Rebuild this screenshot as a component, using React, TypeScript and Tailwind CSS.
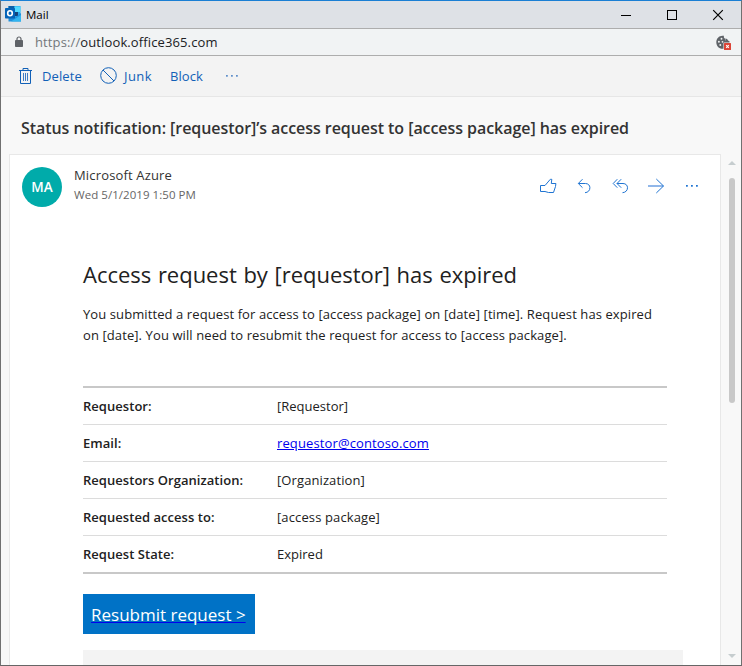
import type { ReactNode } from "react";

function OutlookLogo() {
  return (
    <svg width="16" height="16" viewBox="0 0 16 16">
      <rect x="3.500" y="0" width="12" height="12" fill="#28a8ea" />
      <rect x="3.500" y="0" width="6" height="4" fill="#0a5ea8" />
      <rect x="9.500" y="0.500" width="6" height="5.500" fill="#50d9ff" />
      <rect x="7" y="6" width="6" height="4" fill="#14447d" />
      <path d="M3.500 15.500V8l6.500 3.500L16 7v8.500z" fill="#1f8fdc" />
      <path d="M16 7v8.500H6L16 9z" fill="#31b5f0" />
      <rect x="0" y="2" width="10" height="10.500" rx="0.700" fill="#0463b8" />
      <ellipse cx="5" cy="7.300" rx="2.300" ry="2.500" fill="none" stroke="#fff" strokeWidth="1.600" />
    </svg>
  );
}

function Lock() {
  return (
    <svg width="8" height="12" viewBox="0 0 8 12">
      <path d="M2 5V3a2 2 0 0 1 4 0v2" fill="none" stroke="#5f6368" strokeWidth="1.200" />
      <rect x="0" y="4" width="8" height="7" rx="0.800" fill="#5f6368" />
    </svg>
  );
}

function BlockedCookie() {
  return (
    <svg width="16" height="16" viewBox="0 0 16 16">
      <path d="M6.500 0.700C3 0.700 0.300 3.600 0.300 7.200s2.700 6.600 6.200 6.600c3.700 0 6.500-2.700 6.700-6.100-1.300.1-1.700-.7-1.900-1.600-1.600.2-2.400-.9-2-2.300C8 3.500 7.500 2 8 .8z" fill="#5f6368" />
      <path d="M9.500 3.500l1.600.4 1 1.500 1.500 1-.2 2h-4z" fill="#5f6368" />
      <g fill="#f1f3f4">
        <circle cx="5.500" cy="3.800" r="0.950" />
        <circle cx="2.900" cy="6.800" r="0.950" />
        <circle cx="6.500" cy="6.800" r="0.850" />
        <circle cx="4.300" cy="10" r="0.950" />
      </g>
      <rect x="7.500" y="7.500" width="8" height="8" rx="0.600" fill="#f1f3f4" />
      <rect x="8" y="8" width="7" height="7" rx="0.500" fill="#db4437" />
      <path d="M10.200 10.200l2.600 2.600m0-2.600l-2.600 2.600" stroke="#fff" strokeWidth="1.100" />
    </svg>
  );
}

function Trash() {
  return (
    <svg width="13" height="16" viewBox="0 0 13 16" fill="none" stroke="#1160b7">
      <path d="M0 2.500h13M4 2.500v-2h5v2M1.500 2.500v13h10v-13" />
      <path d="M4.500 5v8M6.500 5v8M8.500 5v8" stroke="#3f7cc4" />
    </svg>
  );
}

function Junk() {
  return (
    <svg className="-mt-px" width="17" height="17" viewBox="0 0 17 17" fill="none" stroke="#1160b7">
      <circle cx="8.500" cy="8.500" r="7.800" />
      <path d="M3 3l11 11" />
    </svg>
  );
}

function Dots({ color }: { color: string }) {
  return (
    <svg width="14" height="2" viewBox="0 0 14 2" fill={color}>
      <rect x="1" y="0" width="1.800" height="1.700" />
      <rect x="6" y="0" width="1.800" height="1.700" />
      <rect x="11" y="0" width="1.800" height="1.700" />
    </svg>
  );
}

function Row({ label, last, children }: { label: string; last?: boolean; children: ReactNode }) {
  return (
    <div className={last ? "flex h-9 items-center pt-0.5" : "flex h-[37px] items-center border-b border-[#dcdcdc] pt-0.5"}>
      <div className="w-[194px] font-semibold tracking-[0.040px]">{label}</div>
      <div>{children}</div>
    </div>
  );
}

export default function App() {
  return (
    <div className="flex h-[666px] w-[742px] flex-col overflow-hidden border border-t-[#1a7fd4] border-r-[#707070] border-b-[#666] border-l-[#707070] bg-[#f8f8f8] font-['Open_Sans','Noto_Sans',sans-serif] text-[13px] text-[#212121]">
      <header className="flex h-7 shrink-0 items-center border-b border-[#adadad] bg-[#dee1e6] pl-1">
        <div className="-mt-0.5">
          <OutlookLogo />
        </div>
        <span className="ml-[5px] text-[11.500px] leading-[28px] text-black">Mail</span>
        <svg className="mt-px mr-4 ml-auto" width="104" height="12" viewBox="0 0 104 12" fill="none" stroke="#000">
          <path d="M0 6.500h10" />
          <rect x="46.500" y="1.500" width="9" height="9" />
          <path d="M92.200 1.200l9.600 9.600M101.800 1.200l-9.600 9.600" strokeWidth="1.200" />
        </svg>
      </header>

      <div className="flex h-[27px] shrink-0 items-center border-b border-[#adadad] bg-[#f1f3f4] pl-[14px]">
        <Lock />
        <div className="ml-3 pt-0.5 tracking-[0.120px] text-[#202124]">
          <span className="text-[#73777b]">https://</span>outlook.office365.com
        </div>
        <div className="mt-0.5 mr-[9px] ml-auto">
          <BlockedCookie />
        </div>
      </div>

      <nav className="flex h-[41px] shrink-0 items-center border-b border-[#e6e6e6] bg-[#f3f3f3] pl-[18px] text-[#1160b7]">
        <Trash />
        <span className="ml-[10px] w-[58px] pt-0.5 tracking-[0.100px]">Delete</span>
        <Junk />
        <span className="ml-[7px] w-[46px] pt-0.5 tracking-[0.400px]">Junk</span>
        <span className="w-[55px] pt-0.5 tracking-[0.050px]">Block</span>
        <Dots color="#5f8fca" />
      </nav>

      <h1 className="h-[57px] shrink-0 pl-5 text-[16px] leading-[63px] font-semibold tracking-[-0.058px] whitespace-nowrap text-[#333]">
        Status notification: [requestor]’s access request to [access package] has expired
      </h1>

      <div className="flex min-h-0 flex-1 pl-2">
        <main className="w-[712px] shrink-0 overflow-hidden border border-b-0 border-[#e8e8e8] bg-white">
          <div className="flex h-[98px] pt-3 pl-3">
            <div className="flex size-10 shrink-0 items-center justify-center rounded-full bg-[#00abaa] text-[13.500px] font-semibold text-white">
              MA
            </div>
            <div className="ml-3 pt-px">
              <div className="h-[14px] leading-[14px] tracking-[0.160px] text-[#333]">Microsoft Azure</div>
              <div className="mt-[5px] h-[15px] text-[11.500px] leading-[15px] tracking-[0.050px] text-[#666]">Wed 5/1/2019 1:50 PM</div>
            </div>
            <div className="mr-[21px] ml-auto flex h-[37px] items-center">
              <svg width="17" height="16" viewBox="0 0 17 16" fill="none" stroke="#1f74d2">
                <path d="M0.500 7.500H5L10.300 1.300H11.800L11.300 5.500H15.900L15.500 8.500L13.500 14.500H8.500L5 13.500H0.500Z" />
              </svg>
              <svg className="ml-5" width="15" height="16" viewBox="0 0 15 16" fill="none" stroke="#1f74d2">
                <path d="M5.500 1.200L1.300 5.500L5.500 9.700M1.500 5.500H8.500C11.200 5.500 12.900 7.400 12.900 9.700C12.900 12.500 11 14.500 8 14.700" />
              </svg>
              <svg className="ml-5" width="17" height="16" viewBox="0 0 17 16" fill="none" stroke="#1f74d2">
                <path d="M5.300 1.200L1.200 5.500L5.300 9.700M9.200 1.200L5 5.500L9.200 9.700M5 5.500H11C13.800 5.500 15.500 7.400 15.500 9.700C15.500 12.500 13.500 14.500 10.500 14.700" />
              </svg>
              <svg className="ml-[19px]" width="17" height="16" viewBox="0 0 17 16" fill="none" stroke="#1f74d2">
                <path d="M0 8H15.500" stroke="#6d9fe2" strokeWidth="1.500" />
                <path d="M8.300 1L15.500 8L8.300 15" />
              </svg>
              <span className="ml-5 flex">
                <Dots color="#1f74d2" />
              </span>
            </div>
          </div>

          <article className="ml-[73px] w-[600px]">
            <h2 className="h-[42px] text-[22px] leading-[42px] tracking-[-0.020px] whitespace-nowrap [word-spacing:1px]">
              Access request by [requestor] has expired
            </h2>
            <p className="mt-[9px] leading-[21px] tracking-[0.093px] whitespace-nowrap">
              You submitted a request for access to [access package] on [date] [time]. Request has expired
              <br />
              on [date]. You will need to resubmit the request for access to [access package].
            </p>
            <div className="mt-10 w-[584px] border-y-2 border-[#c8c8c8]">
              <Row label="Requestor:">[Requestor]</Row>
              <Row label="Email:">
                <span className="tracking-[0.120px] text-[#0000ee] underline underline-offset-1">requestor@contoso.com</span>
              </Row>
              <Row label="Requestors Organization:">
                <span className="tracking-[0.100px]">[Organization]</span>
              </Row>
              <Row label="Requested access to:">
                <span className="tracking-[0.120px]">[access package]</span>
              </Row>
              <Row label="Request State:" last>
                Expired
              </Row>
            </div>
            <div className="mt-5 flex h-10 w-[172px] items-center bg-[#0072c6] pt-0.5 pl-2 text-[17px]">
              <span className="whitespace-nowrap text-white underline decoration-[#0000ee] decoration-1 underline-offset-1">
                Resubmit request &gt;
              </span>
            </div>
            <div className="mt-4 h-4 bg-[#f3f3f3]" />
          </article>
        </main>

        <aside className="flex flex-1 flex-col items-center pl-[2px]">
          <svg className="mt-[7px]" width="8" height="4" viewBox="0 0 8 4">
            <path d="M0 4L4 0L8 4Z" fill="#c6cdcf" />
          </svg>
          <div className="mt-[13px] h-[225px] w-1.5 rounded-full bg-[#c8c8c8]" />
          <svg className="mt-auto mb-[7px]" width="8" height="4" viewBox="0 0 8 4">
            <path d="M0 0L4 4L8 0Z" fill="#c6cdcf" />
          </svg>
        </aside>
      </div>
    </div>
  );
}
